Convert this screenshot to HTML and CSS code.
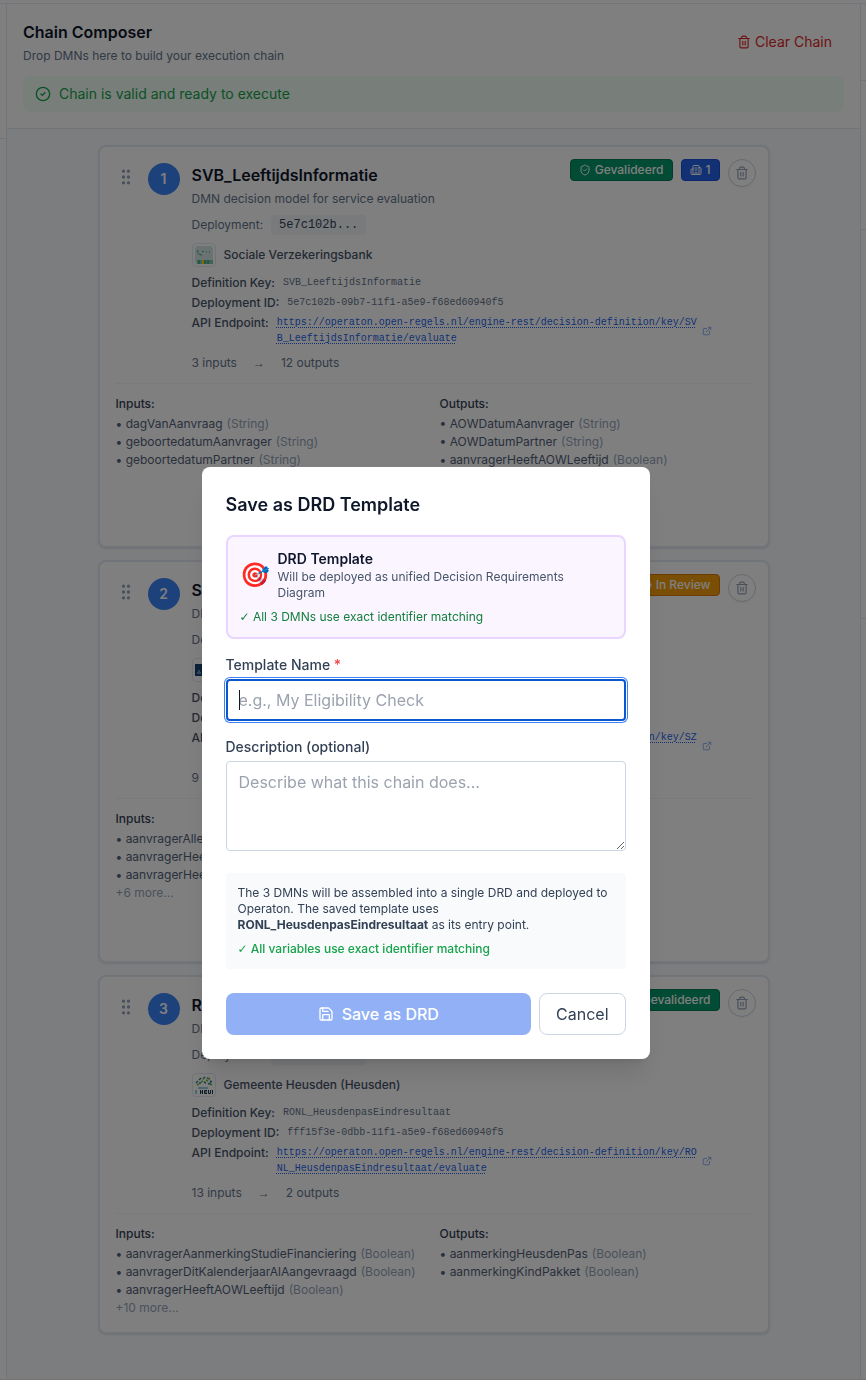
FILE: index.html
```html
<!DOCTYPE html>
<html lang="en">
<head>
    <meta charset="UTF-8">
    <meta name="viewport" content="width=device-width, initial-scale=1.0">
    <title>Chain Composer</title>
    <link rel="stylesheet" href="styles.css">
</head>
<body>

    <!-- Shared icons -->
    <svg class="icon-defs" width="0" height="0">
        <symbol id="i-trash" viewBox="0 0 24 24"><path d="M3 6h18M19 6v14a2 2 0 0 1-2 2H7a2 2 0 0 1-2-2V6M8 6V4a2 2 0 0 1 2-2h4a2 2 0 0 1 2 2v2M10 11v6M14 11v6"/></symbol>
        <symbol id="i-check" viewBox="0 0 24 24"><circle cx="12" cy="12" r="10"/><path d="m9 12 2 2 4-4"/></symbol>
        <symbol id="i-grip" viewBox="0 0 24 24"><circle cx="9" cy="12" r="1"/><circle cx="9" cy="5" r="1"/><circle cx="9" cy="19" r="1"/><circle cx="15" cy="12" r="1"/><circle cx="15" cy="5" r="1"/><circle cx="15" cy="19" r="1"/></symbol>
        <symbol id="i-shield" viewBox="0 0 24 24"><path d="M20 13c0 5-3.5 7.5-7.66 8.95a1 1 0 0 1-.67-.01C7.5 20.5 4 18 4 13V6a1 1 0 0 1 1-1c2 0 4.500-1.200 6.240-2.720a1.170 1.170 0 0 1 1.520 0C14.510 3.810 17 5 19 5a1 1 0 0 1 1 1z"/><path d="m9 12 2 2 4-4"/></symbol>
        <symbol id="i-building" viewBox="0 0 24 24"><path d="M10 12h4M10 8h4M14 21v-3a2 2 0 0 0-4 0v3M6 10H4a2 2 0 0 0-2 2v7a2 2 0 0 0 2 2h16a2 2 0 0 0 2-2V9a2 2 0 0 0-2-2h-2M6 21V5a2 2 0 0 1 2-2h8a2 2 0 0 1 2 2v16"/></symbol>
        <symbol id="i-external" viewBox="0 0 24 24"><path d="M15 3h6v6M10 14 21 3M18 13v6a2 2 0 0 1-2 2H5a2 2 0 0 1-2-2V8a2 2 0 0 1 2-2h6"/></symbol>
        <symbol id="i-clock" viewBox="0 0 24 24"><circle cx="12" cy="12" r="10"/><path d="M12 6v6l4 2"/></symbol>
        <symbol id="i-save" viewBox="0 0 24 24"><path d="M15.200 3a2 2 0 0 1 1.400.6l3.800 3.800a2 2 0 0 1 .6 1.400V19a2 2 0 0 1-2 2H5a2 2 0 0 1-2-2V5a2 2 0 0 1 2-2z"/><path d="M17 21v-7a1 1 0 0 0-1-1H8a1 1 0 0 0-1 1v7M7 3v4a1 1 0 0 0 1 1h7"/></symbol>
    </svg>

    <div class="app">
        <aside class="side-left"><div class="side-left-head"></div></aside>

        <main class="composer">
            <header class="composer-header">
                <div class="header-row">
                    <div>
                        <h2>Chain Composer</h2>
                        <p>Drop DMNs here to build your execution chain</p>
                    </div>
                    <button class="clear-btn"><svg class="icon" width="14" height="14"><use href="#i-trash"/></svg>Clear Chain</button>
                </div>
                <div class="status"><svg class="icon" width="16" height="16"><use href="#i-check"/></svg>Chain is valid and ready to execute</div>
            </header>

            <div class="chain">
                <!-- Step 1 -->
                <article class="card tall">
                    <div class="actions">
                        <span class="badge green"><svg class="icon" width="12" height="12"><use href="#i-shield"/></svg>Gevalideerd</span>
                        <span class="badge blue"><svg class="icon" width="12" height="12"><use href="#i-building"/></svg>1</span>
                        <button class="remove"><svg class="icon" width="14" height="14"><use href="#i-trash"/></svg></button>
                    </div>
                    <div class="card-main">
                        <svg class="icon grip" width="20" height="20"><use href="#i-grip"/></svg>
                        <div class="step">1</div>
                        <div class="info">
                            <h3>SVB_LeeftijdsInformatie</h3>
                            <p class="desc">DMN decision model for service evaluation</p>
                            <div class="deployment">Deployment: <code>5e7c102b...</code></div>
                            <div class="org">
                                <span class="logo">
                                    <svg width="18" height="18" viewBox="0 0 18 18">
                                        <rect width="18" height="18" rx="3" fill="#d3e8e4"/>
                                        <path d="M3 4c-1 3 1 5 4 5M7 6l2-1M11 6h1M14 6h1" stroke="#3f9c7c" fill="none"/>
                                        <path d="M2 14h16v4H2z" fill="#7fc9ad"/>
                                        <path d="M4 14v4M10 14v4M13 14v4" stroke="#1f8a70"/>
                                        <path d="M7 14h2v4H7z" fill="#ffd900"/>
                                    </svg>
                                </span>
                                Sociale Verzekeringsbank
                            </div>
                            <dl class="meta">
                                <div><dt>Definition Key:</dt><dd>SVB_LeeftijdsInformatie</dd></div>
                                <div><dt>Deployment ID:</dt><dd>5e7c102b-09b7-11f1-a5e9-f68ed60940f5</dd></div>
                                <div><dt>API Endpoint:</dt><dd class="endpoint"><a href="#">https://operaton.open-regels.nl/engine-rest/decision-definition/key/SVB_LeeftijdsInformatie/evaluate</a><svg class="icon" width="10" height="10"><use href="#i-external"/></svg></dd></div>
                            </dl>
                            <div class="counts"><span>3 inputs</span><span class="arrow">→</span><span>12 outputs</span></div>
                        </div>
                    </div>
                    <div class="variables">
                        <div>
                            <h4>Inputs:</h4>
                            <ul>
                                <li>• dagVanAanvraag<span>(String)</span></li>
                                <li>• geboortedatumAanvrager<span>(String)</span></li>
                                <li>• geboortedatumPartner<span>(String)</span></li>
                            </ul>
                        </div>
                        <div>
                            <h4>Outputs:</h4>
                            <ul>
                                <li>• AOWDatumAanvrager<span>(String)</span></li>
                                <li>• AOWDatumPartner<span>(String)</span></li>
                                <li>• aanvragerHeeftAOWLeeftijd<span>(Boolean)</span></li>
                            </ul>
                        </div>
                    </div>
                </article>

                <!-- Step 2 -->
                <article class="card tall">
                    <div class="actions">
                        <span class="badge amber"><svg class="icon" width="12" height="12"><use href="#i-clock"/></svg>In Review</span>
                        <button class="remove"><svg class="icon" width="14" height="14"><use href="#i-trash"/></svg></button>
                    </div>
                    <div class="card-main">
                        <svg class="icon grip" width="20" height="20"><use href="#i-grip"/></svg>
                        <div class="step">2</div>
                        <div class="info">
                            <h3>SZW</h3>
                            <p class="desc">DMN</p>
                            <div class="deployment">Deployment:</div>
                            <div class="org">
                                <span class="logo">
                                    <svg width="18" height="18" viewBox="0 0 18 18">
                                        <path d="M0 3h8v12H0z" fill="#154273"/>
                                        <path d="M2 12h4M3 10h2" stroke="#c5d3e2"/>
                                    </svg>
                                </span>
                            </div>
                            <dl class="meta">
                                <div><dt>Definition Key:</dt></div>
                                <div><dt>Deployment ID:</dt></div>
                                <div><dt>API Endpoint:</dt><dd class="endpoint"><a href="#">https://operaton.open-regels.nl/engine-rest/decision-definition/key/SZ<br>W</a><svg class="icon" width="10" height="10"><use href="#i-external"/></svg></dd></div>
                            </dl>
                            <div class="counts"><span>9 inputs</span></div>
                        </div>
                    </div>
                    <div class="variables">
                        <div>
                            <h4>Inputs:</h4>
                            <ul>
                                <li>• aanvragerAlleen</li>
                                <li>• aanvragerHeeft</li>
                                <li>• aanvragerHeeft</li>
                                <li class="more">+6 more...</li>
                            </ul>
                        </div>
                    </div>
                </article>

                <!-- Step 3 -->
                <article class="card">
                    <div class="actions">
                        <span class="badge green"><svg class="icon" width="12" height="12"><use href="#i-shield"/></svg>Gevalideerd</span>
                        <button class="remove"><svg class="icon" width="14" height="14"><use href="#i-trash"/></svg></button>
                    </div>
                    <div class="card-main">
                        <svg class="icon grip" width="20" height="20"><use href="#i-grip"/></svg>
                        <div class="step">3</div>
                        <div class="info">
                            <h3>RONL</h3>
                            <p class="desc">DMN</p>
                            <div class="deployment">Deployment: <code>fff15f3e...</code></div>
                            <div class="org">
                                <span class="logo">
                                    <svg width="18" height="18" viewBox="0 0 18 18">
                                        <path d="M1 7l2-2M4 4l2-2M8 3l2-2M12 2l3 1M15 5l2 1M13 8l3-1M4 7h2M9 6l2 1" stroke="#1e8f8a" stroke-width="1.600"/>
                                        <path d="M2 9l2-1M6 6l2-1M11 4l2 1M15 8l2 1" stroke="#75b72c" stroke-width="1.500"/>
                                        <path d="M7 3h2M13 2h2" stroke="#e3c530"/>
                                        <path d="M1 14v4M3 12h10" stroke="#27a0c4"/>
                                        <path d="M5.500 14v4M7.500 14v4M5.500 16h2M12 14.500H9.500v3H12M9.500 16H12M13.500 14v3.500h2V14M17.500 14v4" stroke="#123b4c" fill="none"/>
                                    </svg>
                                </span>
                                Gemeente Heusden (Heusden)
                            </div>
                            <dl class="meta">
                                <div><dt>Definition Key:</dt><dd>RONL_HeusdenpasEindresultaat</dd></div>
                                <div><dt>Deployment ID:</dt><dd>fff15f3e-0dbb-11f1-a5e9-f68ed60940f5</dd></div>
                                <div><dt>API Endpoint:</dt><dd class="endpoint"><a href="#">https://operaton.open-regels.nl/engine-rest/decision-definition/key/RONL_HeusdenpasEindresultaat/evaluate</a><svg class="icon" width="10" height="10"><use href="#i-external"/></svg></dd></div>
                            </dl>
                            <div class="counts"><span>13 inputs</span><span class="arrow">→</span><span>2 outputs</span></div>
                        </div>
                    </div>
                    <div class="variables">
                        <div>
                            <h4>Inputs:</h4>
                            <ul>
                                <li>• aanvragerAanmerkingStudieFinanciering<span>(Boolean)</span></li>
                                <li>• aanvragerDitKalenderjaarAlAangevraagd<span>(Boolean)</span></li>
                                <li>• aanvragerHeeftAOWLeeftijd<span>(Boolean)</span></li>
                                <li class="more">+10 more...</li>
                            </ul>
                        </div>
                        <div>
                            <h4>Outputs:</h4>
                            <ul>
                                <li>• aanmerkingHeusdenPas<span>(Boolean)</span></li>
                                <li>• aanmerkingKindPakket<span>(Boolean)</span></li>
                            </ul>
                        </div>
                    </div>
                </article>
            </div>
        </main>

        <aside class="side-right">
            <div class="r1"></div>
            <div class="r2"></div>
            <div class="r3"></div>
        </aside>
    </div>

    <!-- Save dialog -->
    <div class="overlay">
        <div class="modal">
            <h3>Save as DRD Template</h3>

            <div class="drd-box">
                <div class="drd-row">
                    <span class="emoji">🎯</span>
                    <div>
                        <div class="drd-title">DRD Template</div>
                        <div class="drd-text">Will be deployed as unified Decision Requirements Diagram</div>
                    </div>
                </div>
                <div class="drd-ok"><span class="tick">✓</span> All 3 DMNs use exact identifier matching</div>
            </div>

            <label for="name">Template Name <span class="req">*</span></label>
            <div class="name-field">
                <input type="text" id="name" placeholder="e.g., My Eligibility Check">
            </div>

            <label for="description" class="second">Description (optional)</label>
            <textarea id="description" rows="3" placeholder="Describe what this chain does..."></textarea>

            <div class="note">
                <p>The 3 DMNs will be assembled into a single DRD and deployed to Operaton. The saved template uses <strong>RONL_HeusdenpasEindresultaat</strong> as its entry point.</p>
                <p class="note-ok"><span class="tick">✓</span> All variables use exact identifier matching</p>
            </div>

            <div class="buttons">
                <button class="save" disabled><svg class="icon" width="16" height="16"><use href="#i-save"/></svg>Save as DRD</button>
                <button class="cancel">Cancel</button>
            </div>
        </div>
    </div>

</body>
</html>
```
FILE: styles.css
```css
* {
    box-sizing: border-box;
    margin: 0;
    padding: 0;
}
body {
    font-family: Inter, "Liberation Sans", sans-serif;
    font-size: 16px;
    line-height: 24px;
    color: #0f172a;
    background: #fff;
    height: 1380px;
    overflow: hidden;
}
button, input, textarea {
    font: inherit;
    color: inherit;
}
button {
    background: none;
    border: none;
}
ul {
    list-style: none;
}
.icon-defs {
    display: none;
}
.icon {
    fill: none;
    stroke: currentColor;
    stroke-width: 2;
    stroke-linecap: round;
    stroke-linejoin: round;
    flex-shrink: 0;
}

/* Page columns */
.app {
    display: flex;
    height: 1380px;
    padding-top: 3px;
    background: #fff;
    border-bottom: 1px solid #f0e6ea;
}
.side-left {
    width: 7px;
    border-top: 1px solid #e2e8f0;
    border-right: 1px solid #e2e8f0;
}
.side-left-head {
    height: 135px;
    border-bottom: 1px solid #e2e8f0;
}
.composer {
    width: 853px;
    border-top: 1px solid #e2e8f0;
    background: #f8fafc;
}
.side-right {
    flex: 1;
    border-top: 1px solid #e2e8f0;
    border-left: 1px solid #e2e8f0;
}
.side-right div {
    border-bottom: 1px solid #e2e8f0;
}
.r1 {
    height: 77px;
}
.r2 {
    height: 149px;
}
.r3 {
    height: 389px;
}

/* Composer header */
.composer-header {
    height: 125px;
    padding: 16px;
    background: #fff;
    border-bottom: 1px solid #e2e8f0;
}
.header-row {
    display: flex;
    justify-content: space-between;
    align-items: center;
    height: 44px;
    margin-bottom: 12px;
}
.composer-header h2 {
    font-size: 16px;
    font-weight: 600;
}
.composer-header p {
    font-size: 12px;
    line-height: 16px;
    margin-top: 4px;
    color: #64748b;
}
.clear-btn {
    display: flex;
    align-items: center;
    gap: 4px;
    padding: 6px 12px;
    font-size: 14px;
    line-height: 20px;
    color: #dc2626;
}
.status {
    display: flex;
    align-items: center;
    gap: 8px;
    padding: 8px 12px;
    border-radius: 8px;
    background: #f0fdf4;
    color: #16a34a;
    font-size: 14px;
    line-height: 20px;
}

/* DMN cards */
.chain {
    display: flex;
    flex-direction: column;
    gap: 12px;
    width: 672px;
    margin: 16px auto 0;
}
.card {
    position: relative;
    padding: 16px;
    height: 359px;
    background: #fff;
    border: 2px solid #e2e8f0;
    border-radius: 8px;
    box-shadow: 0 1px 2px rgba(0, 0, 0, 0.1);
}
.card.tall {
    height: 403px;
}
.actions {
    position: absolute;
    top: 12px;
    right: 12px;
    display: flex;
    align-items: flex-start;
    gap: 8px;
}
.badge {
    display: flex;
    align-items: center;
    gap: 4px;
    height: 22px;
    padding: 0 8px;
    border: 1px solid;
    border-radius: 4px;
    font-size: 12px;
    font-weight: 500;
    color: #fff;
}
.green {
    background: #059669;
    border-color: #047857;
}
.blue {
    background: #2563eb;
    border-color: #1d4ed8;
}
.amber {
    background: #f59e0b;
    border-color: #d97706;
}
.remove {
    display: flex;
    align-items: center;
    justify-content: center;
    width: 28px;
    height: 28px;
    border: 1px solid #cbd5e1;
    border-radius: 50%;
    color: #94a3b8;
    box-shadow: 0 1px 2px rgba(0, 0, 0, 0.05);
}
.card-main {
    display: flex;
    gap: 12px;
}
.grip {
    margin-top: 4px;
    color: #94a3b8;
}
.step {
    flex-shrink: 0;
    width: 32px;
    height: 32px;
    border-radius: 50%;
    background: #3b82f6;
    color: #fff;
    font-size: 14px;
    font-weight: 600;
    line-height: 32px;
    text-align: center;
}
.info {
    flex: 1;
    font-size: 12px;
    line-height: 16px;
    color: #64748b;
}
.info h3 {
    font-size: 16px;
    font-weight: 600;
    line-height: 24px;
    color: #0f172a;
}
.desc {
    margin-top: 4px;
}
.deployment {
    display: flex;
    align-items: center;
    gap: 8px;
    height: 20px;
    margin-top: 8px;
}
.deployment code {
    padding: 2px 8px;
    border-radius: 4px;
    background: #f1f5f9;
    color: #334155;
    font-family: "Liberation Mono", monospace;
    font-size: 12px;
}
.org {
    display: flex;
    align-items: center;
    gap: 8px;
    margin-top: 8px;
    font-weight: 500;
    color: #475569;
}
.logo {
    display: flex;
    align-items: center;
    justify-content: center;
    width: 24px;
    height: 24px;
    border: 1px solid #e2e8f0;
    border-radius: 4px;
}
.meta {
    display: flex;
    flex-direction: column;
    gap: 4px;
    margin-top: 8px;
}
.meta > div {
    display: flex;
    gap: 8px;
}
.meta dt {
    font-weight: 500;
    color: #475569;
    white-space: nowrap;
}
.meta dd {
    font-family: "Liberation Mono", monospace;
    font-size: 10px;
    line-height: 16px;
}
.endpoint {
    display: flex;
    align-items: center;
    gap: 4px;
    color: #2563eb;
}
.endpoint a {
    width: 421px;
    color: #2563eb;
    text-decoration: underline dotted;
    text-underline-offset: 2px;
    word-break: break-all;
}
.endpoint .icon {
    opacity: 0.6;
}
.counts {
    display: flex;
    gap: 16px;
    margin-top: 8px;
}
.arrow {
    font-family: "Liberation Sans", sans-serif;
}
.variables {
    display: grid;
    grid-template-columns: 1fr 1fr;
    gap: 12px;
    margin-top: 12px;
    padding-top: 12px;
    border-top: 1px solid #f1f5f9;
    font-size: 12px;
    line-height: 16px;
    color: #536179;
}
.variables h4 {
    font-size: 12px;
    font-weight: 500;
    color: #334155;
    margin-bottom: 4px;
}
.variables li {
    margin-bottom: 2px;
    white-space: nowrap;
}
.variables li span {
    margin-left: 4px;
}
.variables li span, .variables .more {
    color: #94a3b8;
}

/* Dialog */
.overlay {
    position: fixed;
    top: 0;
    left: 0;
    width: 866px;
    height: 1380px;
    padding: 467px 0 0 201.5px;
    background: rgba(0, 0, 0, 0.5);
}
.modal {
    width: 448px;
    height: 592px;
    padding: 24px;
    background: #fff;
    border-radius: 8px;
    box-shadow: 0 20px 25px -5px rgba(0, 0, 0, 0.1), 0 8px 10px -6px rgba(0, 0, 0, 0.1);
}
.modal h3 {
    font-size: 18px;
    font-weight: 600;
    line-height: 28px;
    margin-bottom: 16px;
}
.drd-box {
    padding: 12px;
    margin-bottom: 16px;
    border: 2px solid #e9d5ff;
    border-radius: 8px;
    background: #faf5ff;
}
.drd-row {
    display: flex;
    align-items: center;
    gap: 8px;
    font-size: 12px;
    line-height: 16px;
}
.emoji {
    font-size: 24px;
    line-height: 32px;
}
.drd-title {
    font-size: 14px;
    line-height: 20px;
    font-weight: 600;
}
.drd-text {
    color: #475569;
}
.drd-ok {
    margin-top: 8px;
    font-size: 12px;
    line-height: 16px;
    color: #15803d;
}
.tick {
    font-family: "DejaVu Sans", sans-serif;
    font-weight: 400;
    line-height: 1;
}
.modal label {
    display: block;
    margin-bottom: 4px;
    font-size: 14px;
    font-weight: 500;
    line-height: 20px;
    color: #334155;
}
.req {
    color: #ef4444;
}
.modal label.second {
    margin-top: 16px;
}
.name-field {
    position: relative;
    height: 42px;
}
/* text cursor */
.name-field::after {
    content: "";
    position: absolute;
    left: 13.5px;
    top: 11px;
    width: 1px;
    height: 20px;
    background: #0f172a;
}
.modal input, .modal textarea {
    display: block;
    width: 100%;
    padding: 8px 12px;
    border: 1px solid #cbd5e1;
    border-radius: 4px;
    background: #fff;
    outline: none;
}
.modal input {
    height: 42px;
    padding: 7px 11px;
    border: 2px solid #0b57d0;
    box-shadow: 0 0 0 1px #fff, 0 0 0 2px #3b82f6;
}
.modal ::placeholder {
    color: #9ca3af;
}
.note {
    margin-top: 22px;
    padding: 12px;
    border-radius: 4px;
    background: #f8fafc;
    color: #334155;
    font-size: 12px;
    line-height: 16px;
}
.note strong {
    font-weight: 700;
}
.note .note-ok {
    margin-top: 8px;
    font-weight: 500;
    color: #16a34a;
}
.buttons {
    display: flex;
    gap: 8px;
    margin-top: 24px;
}
.buttons button {
    height: 42px;
    border-radius: 8px;
}
.save {
    flex: 1;
    display: flex;
    align-items: center;
    justify-content: center;
    gap: 8px;
    background: #2563eb;
    font-weight: 500;
    opacity: 0.5;
}
.buttons .save {
    color: #fff;
}
.cancel {
    padding: 0 16px;
    border: 1px solid #cbd5e1;
    color: #334155;
}
```
